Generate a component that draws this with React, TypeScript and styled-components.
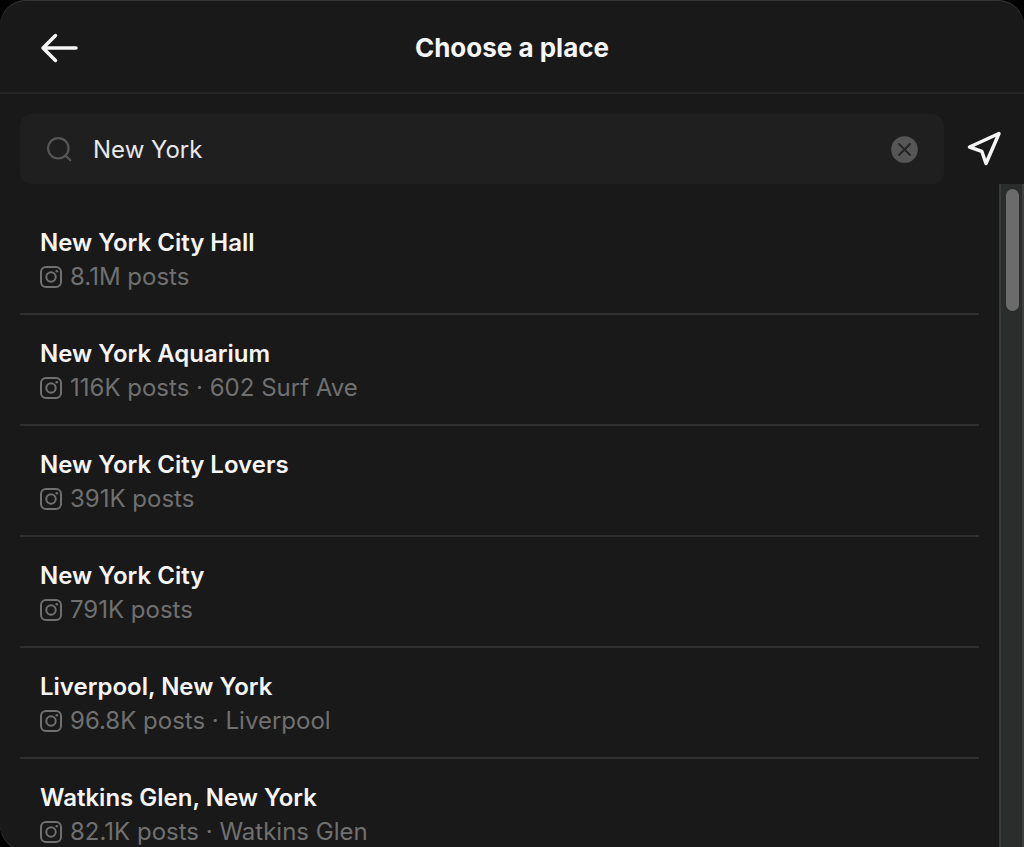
import React, { useState } from "react";
import styled, { createGlobalStyle } from "styled-components";

const GlobalStyle = createGlobalStyle`
  * { box-sizing: border-box; }
  html, body { margin: 0; background: #000; }
  body {
    font-family: Inter, "Liberation Sans", sans-serif;
    color: #f5f5f5;
    overflow: hidden;
  }
`;

const Dialog = styled.main`
  display: flex;
  flex-direction: column;
  height: calc(100vh + 4px);
  overflow: hidden;
  background: #191919;
  border-radius: 26px 26px 0 26px;
  box-shadow: inset 0 1px 0 #333434, inset 0 -1px 0 #333434;
`;

const Header = styled.header`
  display: grid;
  grid-template-columns: 80px 1fr 80px;
  align-items: center;
  flex: none;
  height: 94px;
  padding: 3px 20px 0;
  border-bottom: 2px solid #262626;
`;

const Title = styled.h1`
  margin: 0;
  font-size: 26px;
  line-height: 32px;
  font-weight: 700;
  text-align: center;
`;

const IconButton = styled.button`
  display: flex;
  align-items: center;
  justify-content: center;
  flex: none;
  width: 80px;
  height: 70px;
  padding: 0;
  border: 0;
  background: none;
  color: #f5f5f5;
  cursor: pointer;
`;

const SearchRow = styled.div`
  display: flex;
  flex: none;
  padding: 20px 0 0 20px;
`;

const SearchBox = styled.label`
  display: flex;
  align-items: center;
  flex: 1;
  min-width: 0;
  height: 70px;
  padding: 0 26px;
  gap: 20px;
  border-radius: 12px;
  background: #1f1f1f;
  color: #565656;
`;

const SearchInput = styled.input`
  flex: 1;
  min-width: 0;
  height: 40px;
  padding: 0;
  border: 0;
  outline: 0;
  background: none;
  color: #e8e8e8;
  font: inherit;
  font-size: 24px;
`;

const ClearButton = styled.button`
  display: flex;
  padding: 0;
  border: 0;
  background: none;
  cursor: pointer;
`;

const Results = styled.div`
  display: flex;
  flex: 1;
  min-height: 0;
`;

const PlaceList = styled.ul`
  flex: 1;
  min-width: 0;
  margin: 0;
  padding: 20px 20px 0;
  overflow: hidden;
  list-style: none;
`;

const PlaceItem = styled.li`
  height: 111px;
  padding: 21px 20px 0;
  border-bottom: 2px solid #303030;
`;

const PlaceName = styled.h2`
  margin: 0;
  font-size: 24px;
  line-height: 35px;
  font-weight: 600;
  white-space: nowrap;
`;

const PlaceMeta = styled.p`
  display: flex;
  align-items: center;
  gap: 8px;
  margin: 0;
  font-size: 24px;
  line-height: 34px;
  color: #707070;
  white-space: nowrap;
`;

const ScrollTrack = styled.div`
  flex: none;
  width: 25px;
  padding: 5px 3px 0 5px;
  background: #2b2c2c;
  border-left: 2px solid #393a3a;
  border-right: 2px solid #3d3e3e;
`;

const ScrollThumb = styled.div`
  width: 13px;
  height: 122px;
  border-radius: 7px;
  background: #6b6b6b;
`;

const BackIcon = () => (
  <svg width="40" height="32" viewBox="0 0 40 32" fill="none" stroke="currentColor" strokeWidth="3.500" strokeLinecap="round" strokeLinejoin="round" aria-hidden="true">
    <path d="M36 16H3M15.500 3.500L3 16l12.500 12.500" />
  </svg>
);

const SearchIcon = () => (
  <svg width="27" height="27" viewBox="0 0 27 27" fill="none" stroke="currentColor" strokeWidth="2.200" strokeLinecap="round" aria-hidden="true">
    <circle cx="12.300" cy="12.300" r="10.200" />
    <path d="M19.700 19.700l4.600 4.600" />
  </svg>
);

const ClearIcon = () => (
  <svg width="27" height="27" viewBox="0 0 27 27" aria-hidden="true">
    <circle cx="13.500" cy="13.500" r="13.300" fill="#565656" />
    <path d="M8 8l11 11M19 8L8 19" stroke="#242424" strokeWidth="1.800" strokeLinecap="round" />
  </svg>
);

const LocateIcon = () => (
  <svg width="36" height="36" viewBox="0 0 36 36" fill="none" stroke="currentColor" strokeWidth="3.500" strokeLinejoin="round" aria-hidden="true">
    <path d="M33 2.500L3.500 16l12.300 4.300L20 32.500z" />
  </svg>
);

const InstagramIcon = () => (
  <svg width="22" height="22" viewBox="0 0 22 22" fill="none" stroke="currentColor" strokeWidth="2" aria-hidden="true">
    <rect x="1" y="1" width="20" height="20" rx="5" />
    <circle cx="11" cy="11" r="4.700" />
    <circle cx="16.800" cy="5.200" r="1.300" fill="currentColor" stroke="none" />
  </svg>
);

const places = [
  { name: "New York City Hall", detail: "8.1M posts" },
  { name: "New York Aquarium", detail: "116K posts · 602 Surf Ave" },
  { name: "New York City Lovers", detail: "391K posts" },
  { name: "New York City", detail: "791K posts" },
  { name: "Liverpool, New York", detail: "96.8K posts · Liverpool" },
  { name: "Watkins Glen, New York", detail: "82.1K posts · Watkins Glen" },
];

export default function App() {
  const [query, setQuery] = useState("New York");
  return (
    <>
      <GlobalStyle />
      <Dialog>
        <Header>
          <IconButton aria-label="Back">
            <BackIcon />
          </IconButton>
          <Title>Choose a place</Title>
        </Header>
        <SearchRow>
          <SearchBox>
            <SearchIcon />
            <SearchInput aria-label="Search places" value={query} onChange={(e) => setQuery(e.target.value)} />
            <ClearButton aria-label="Clear search" onClick={() => setQuery("")}>
              <ClearIcon />
            </ClearButton>
          </SearchBox>
          <IconButton aria-label="Use current location">
            <LocateIcon />
          </IconButton>
        </SearchRow>
        <Results>
          <PlaceList>
            {places.map((place) => (
              <PlaceItem key={place.name}>
                <PlaceName>{place.name}</PlaceName>
                <PlaceMeta>
                  <InstagramIcon />
                  {place.detail}
                </PlaceMeta>
              </PlaceItem>
            ))}
          </PlaceList>
          <ScrollTrack aria-hidden="true">
            <ScrollThumb />
          </ScrollTrack>
        </Results>
      </Dialog>
    </>
  );
}
